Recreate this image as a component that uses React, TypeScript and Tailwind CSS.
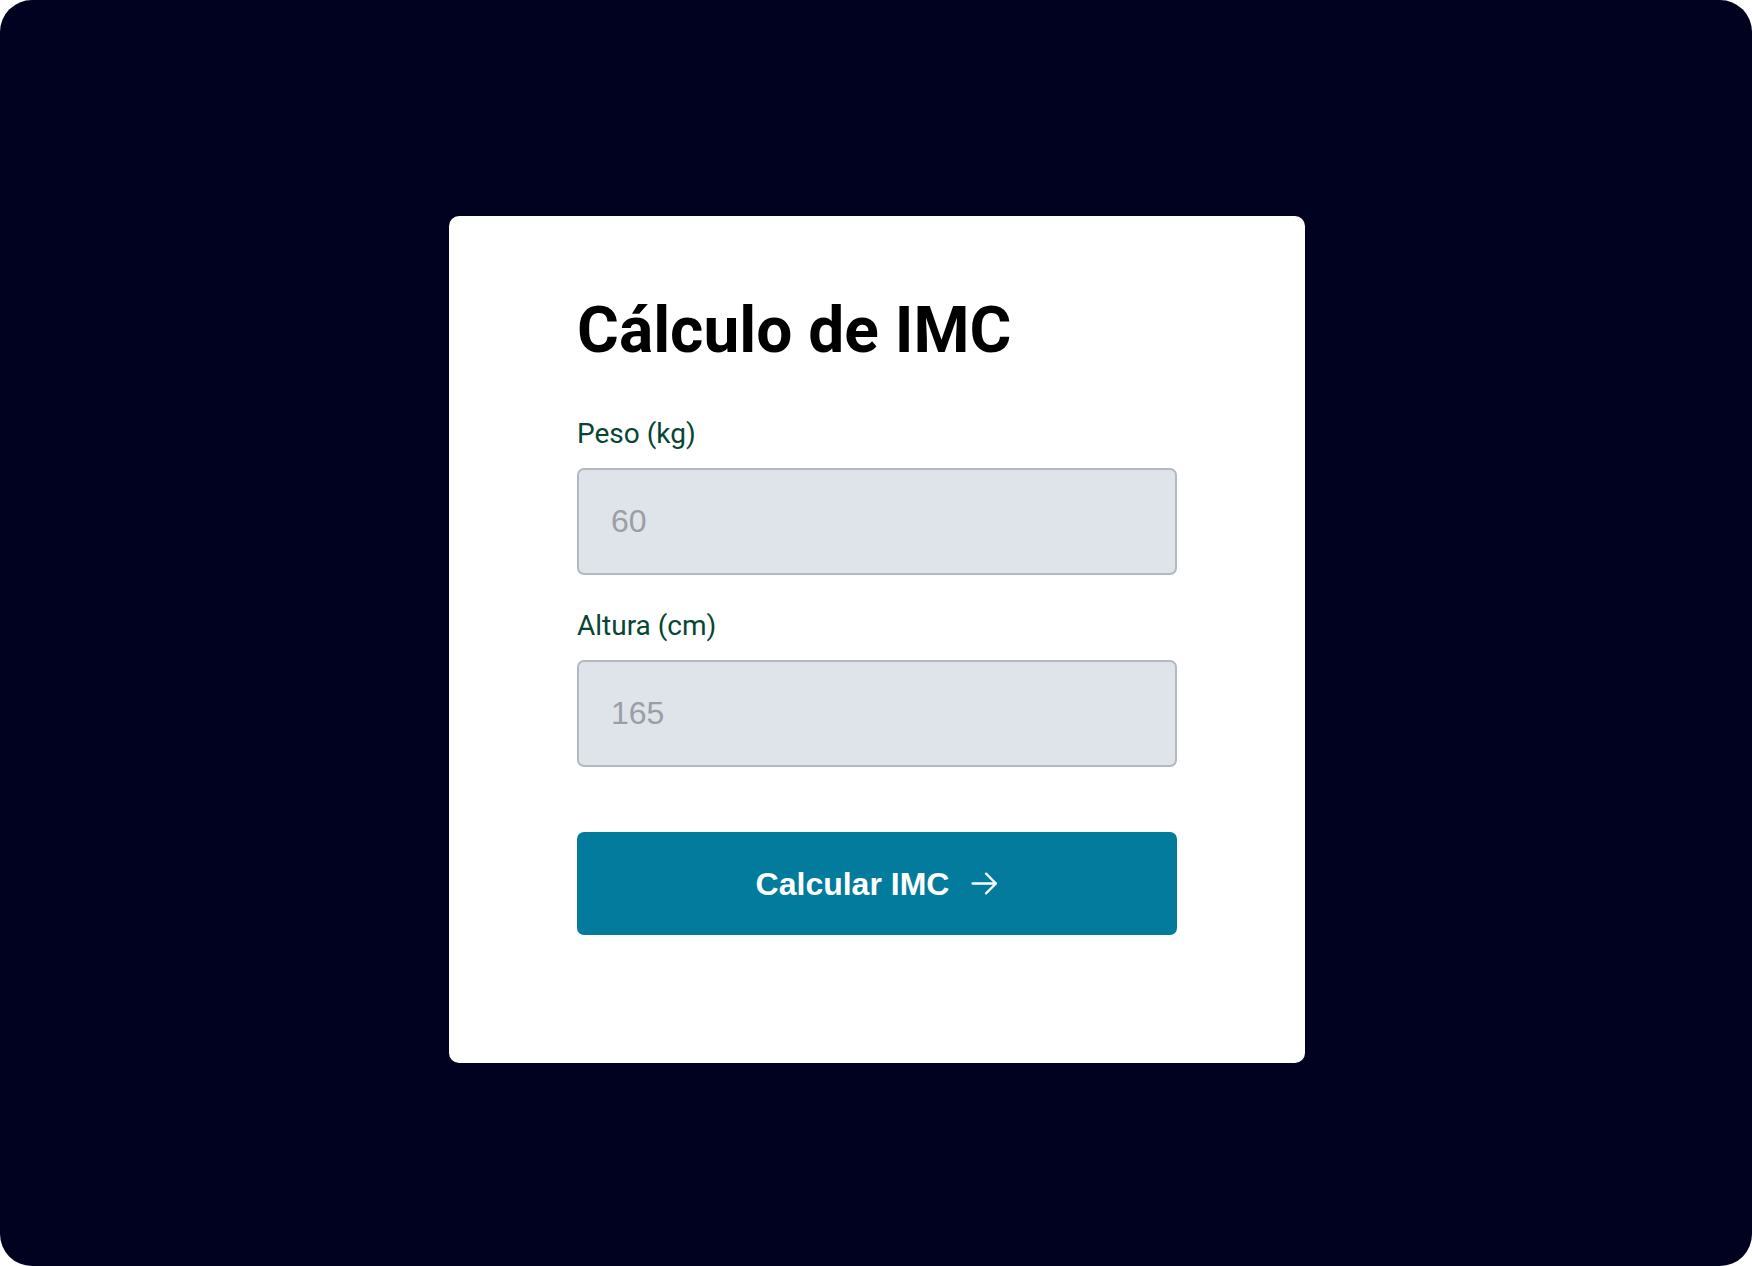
import { useState } from "react";

function Field({
  label,
  placeholder,
  value,
  onChange,
}: {
  label: string;
  placeholder: string;
  value: string;
  onChange: (v: string) => void;
}) {
  return (
    <label className="flex flex-col">
      <span className="font-['Roboto',sans-serif] text-[28px] leading-none text-[#074535]">
        {label}
      </span>
      <input
        type="number"
        value={value}
        placeholder={placeholder}
        onChange={(e) => onChange(e.target.value)}
        className="mt-[20px] h-[107px] w-full rounded-[7px] border-2 border-[#b4b8bf] bg-[#dfe3ea] px-[32px] font-['Liberation_Sans',Arial,sans-serif] text-[32px] text-gray-700 placeholder:text-[#9b9ea4] outline-none"
      />
    </label>
  );
}

export default function App() {
  const [peso, setPeso] = useState("");
  const [altura, setAltura] = useState("");

  return (
    <div className="min-h-screen bg-white">
      <div className="flex h-screen w-full items-center justify-center rounded-[32px] bg-[#00021f] pt-[13px] pl-[2px]">
        <div className="w-[856px] rounded-[10px] bg-white px-[128px] pt-[83px] pb-[128px]">
          <h1 className="font-['Roboto',sans-serif] text-[64px] font-bold leading-none text-black">
            Cálculo de IMC
          </h1>

          <div className="mt-[57px] flex flex-col gap-[37px]">
            <Field label="Peso (kg)" placeholder="60" value={peso} onChange={setPeso} />
            <Field label="Altura (cm)" placeholder="165" value={altura} onChange={setAltura} />
          </div>

          <button
            type="button"
            className="mt-[65px] flex h-[103px] w-full items-center justify-center gap-[22px] rounded-[7px] bg-[#027b9d] font-['Liberation_Sans',Arial,sans-serif] text-[32px] font-bold text-white"
          >
            Calcular IMC
            <svg width="27" height="23" viewBox="0 0 26 22" fill="none" stroke="currentColor" strokeWidth="2.2" strokeLinecap="round" strokeLinejoin="round">
              <line x1="1.5" y1="11" x2="24" y2="11" />
              <polyline points="14.5,1.5 24,11 14.5,20.5" />
            </svg>
          </button>
        </div>
      </div>
    </div>
  );
}
